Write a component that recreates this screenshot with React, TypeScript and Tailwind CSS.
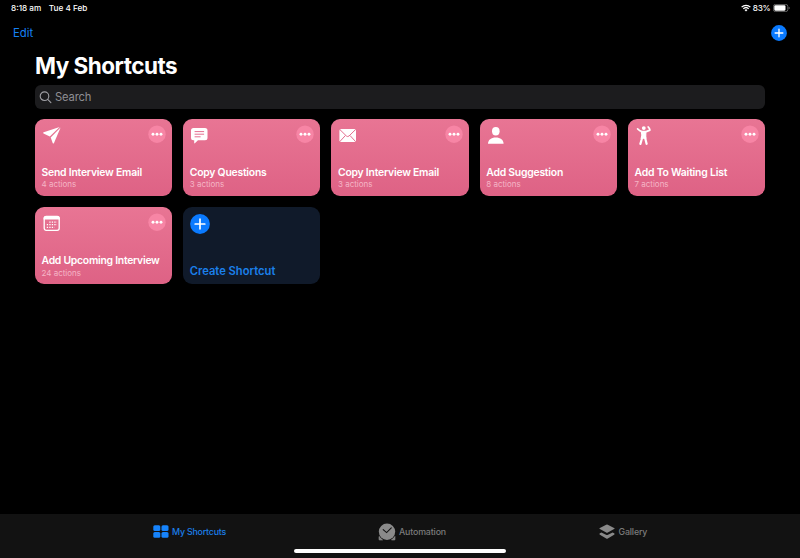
import type { ReactNode } from "react";

type Shortcut = { title: string; actions: number; icon: ReactNode; tracking: string };

const SendIcon = () => (
  <svg width="20" height="20" viewBox="0 0 20 20" fill="#fff">
    <path d="M17.600 1.900 1.700 7.300q-1.200.5-.2 1.200l6.300 3z" />
    <path d="M18.600 2.600 12 17.900q-.7 1.200-1.300 0L8.700 12.400z" />
  </svg>
);

const MessageIcon = () => (
  <svg width="20" height="20" viewBox="0 0 20 20">
    <path
      d="M3.500 3h11.500a2.500 2.500 0 0 1 2.500 2.500v7.300a2.500 2.500 0 0 1-2.500 2.500H8l-3.200 3q-.6.300-.6-.4v-2.600h-.7a2.500 2.500 0 0 1-2.500-2.500V5.500A2.500 2.500 0 0 1 3.500 3z"
      fill="#fff"
    />
    <path d="M4.600 6.600h9.500M4.600 9.200h9.500M4.600 11.800h6" stroke="#e56f90" strokeWidth="1" />
  </svg>
);

const MailIcon = () => (
  <svg width="20" height="20" viewBox="0 0 20 20">
    <rect x="1.400" y="4" width="16.600" height="13" rx="1.800" fill="#fff" />
    <path
      d="M1.900 4.600 8.400 11q1.300 1.100 2.600 0l6.500-6.400M1.900 16.500l5.500-6M17.500 16.500l-5.500-6"
      fill="none"
      stroke="#e56f90"
      strokeWidth="1"
    />
  </svg>
);

const PersonIcon = () => (
  <svg width="20" height="20" viewBox="0 0 20 20" fill="#fff">
    <ellipse cx="9.800" cy="6.300" rx="3.800" ry="4.200" />
    <path d="M2 18.800c0-4 3.200-6.300 7.800-6.300s7.800 2.300 7.800 6.300z" />
  </svg>
);

const DancerIcon = () => (
  <svg width="20" height="20" viewBox="0 0 20 20" fill="none" stroke="#fff" strokeLinecap="round" strokeLinejoin="round">
    <circle cx="9.800" cy="3.100" r="1.900" fill="#fff" stroke="none" />
    <path d="M3.600 3.900 6 5.800l2 .8h4.300l3.600-1.500-.5-1.600-1.200-1.500" strokeWidth="1.700" />
    <path d="M7.400 6.800h4.400l-.1 5.400.2 1H7.300l.6-3z" fill="#fff" strokeWidth="1.200" />
    <path d="m8.200 12.200-.7 2.800-1.100 3.900M11 12.200l.7 3 .9 3.600" strokeWidth="2.200" />
  </svg>
);

const CalendarIcon = () => (
  <svg width="20" height="20" viewBox="0 0 20 20">
    <rect x="2.200" y="3.500" width="15" height="13.800" rx="2" fill="none" stroke="#fff" strokeWidth="1.300" />
    <path d="M1.600 6.500v-1q0-2.500 2.500-2.500h11.200q2.500 0 2.500 2.500v1z" fill="#fff" />
    <path
      d="M7.300 9.100h7.700M4.800 11.700h10.200M4.800 14.300h7.700"
      stroke="#fff"
      strokeWidth="1.300"
      strokeDasharray="1.300 1.200"
    />
  </svg>
);

const shortcuts: Shortcut[] = [
  { title: "Send Interview Email", actions: 4, icon: <SendIcon />, tracking: "tracking-[-0.22px]" },
  { title: "Copy Questions", actions: 3, icon: <MessageIcon />, tracking: "tracking-[-0.23px]" },
  { title: "Copy Interview Email", actions: 3, icon: <MailIcon />, tracking: "tracking-[-0.22px]" },
  { title: "Add Suggestion", actions: 8, icon: <PersonIcon />, tracking: "tracking-[-0.23px]" },
  { title: "Add To Waiting List", actions: 7, icon: <DancerIcon />, tracking: "tracking-[-0.2px]" },
  { title: "Add Upcoming Interview", actions: 24, icon: <CalendarIcon />, tracking: "tracking-[-0.26px]" },
];

const PlusCircle = ({ size }: { size: number }) => (
  <svg width={size} height={size} viewBox="0 0 20 20">
    <circle cx="10" cy="10" r="9.900" fill="#0a7aff" />
    <path d="M10 5.200v9.600M5.200 10h9.600" stroke="#fff" strokeWidth="1.700" strokeLinecap="round" />
  </svg>
);

function ShortcutCard({ title, actions, icon, tracking }: Shortcut) {
  return (
    <div className="flex h-[76.800px] flex-col justify-between rounded-[9px] bg-linear-to-b from-[#e87594] to-[#de6285] pt-[6px] pr-[6px] pb-[5.500px] pl-[6.500px]">
      <div className="flex items-start justify-between">
        {icon}
        <svg width="18" height="18" viewBox="0 0 18 18">
          <circle cx="9" cy="9.200" r="8.700" fill="#f785a5" />
          <g fill="#fff">
            <circle cx="5" cy="9.300" r="1.450" />
            <circle cx="9" cy="9.300" r="1.450" />
            <circle cx="13" cy="9.300" r="1.450" />
          </g>
        </svg>
      </div>
      <div className="whitespace-nowrap">
        <div className={`text-[10.400px] leading-[13.500px] font-semibold text-white ${tracking}`}>{title}</div>
        <div className="text-[8px] leading-[11px] text-[#f5b5c6]">{actions} actions</div>
      </div>
    </div>
  );
}

export default function App() {
  return (
    <div className="flex h-[558px] w-[800px] flex-col overflow-hidden bg-black font-['Inter','Liberation_Sans',sans-serif] text-white">
      <header className="flex h-4 items-center justify-between pr-[10.500px] pl-[11px] text-[8.200px] leading-4 font-medium">
        <div className="flex gap-[7.500px]">
          <span>8:18 am</span>
          <span>Tue 4 Feb</span>
        </div>
        <div className="flex items-center gap-[2px]">
          <svg width="10" height="8" viewBox="0 0 20 15" fill="none" stroke="#fff" strokeWidth="2.600">
            <path d="M1.200 5.700a12.500 12.500 0 0 1 17.600 0M4.600 9a7.800 7.800 0 0 1 10.800 0" />
            <path d="M7 11.500a4.300 4.300 0 0 1 6 0l-3 3z" fill="#fff" stroke="none" />
          </svg>
          <span className="tracking-[-0.2px]">83%</span>
          <svg width="17" height="8" viewBox="0 0 17 8">
            <rect x=".4" y=".4" width="14.400" height="7.200" rx="2" fill="none" stroke="#777" strokeWidth=".8" />
            <rect x="1.300" y="1.300" width="11.200" height="5.400" rx="1.100" fill="#fff" />
            <path d="M15.700 2.700q1 .4 1 1.300t-1 1.300z" fill="#777" />
          </svg>
        </div>
      </header>

      <nav className="flex h-[33px] items-center justify-between pr-[13.500px] pl-[13px]">
        <button className="text-[11.300px] leading-4 text-[#1681f4]">Edit</button>
        <PlusCircle size={16} />
      </nav>

      <main className="flex flex-1 flex-col px-[35px]">
        <h1 className="h-9 text-[22.500px] leading-[34px] font-bold tracking-[-0.5px] whitespace-nowrap">My Shortcuts</h1>
        <div className="flex h-6 items-center gap-[3px] rounded-[6px] bg-[#1c1c1e] pl-[4px] text-[11.200px] text-[#8e8e93]">
          <svg width="13" height="13" viewBox="0 0 13 13" fill="none" stroke="#a0a0a5" strokeWidth="1.100" strokeLinecap="round">
            <circle cx="5.500" cy="5.200" r="4.300" />
            <path d="m8.700 8.400 3.200 3.200" />
          </svg>
          <span className="tracking-[-0.15px]">Search</span>
        </div>
        <div className="mt-[10.200px] grid grid-cols-5 gap-x-[11.200px] gap-y-[11.400px]">
          {shortcuts.map((s) => (
            <ShortcutCard key={s.title} {...s} />
          ))}
          <div className="flex h-[76.800px] flex-col justify-between rounded-[9px] bg-[#101a2a] pt-[6.500px] pb-[5px] pl-[6.500px]">
            <PlusCircle size={20} />
            <div className="text-[11.200px] leading-4 font-semibold text-[#1b80ea]">Create Shortcut</div>
          </div>
        </div>
      </main>

      <footer className="flex h-11 flex-col bg-[#121212] text-[8.800px] leading-3 font-medium text-[#7c7c7c]">
        <div className="flex h-[35px] items-center">
          <div className="flex w-[226px] items-center gap-[3.500px] pl-[152.500px] whitespace-nowrap text-[#1b7fe9]">
            <svg className="shrink-0" width="16" height="13" viewBox="0 0 16 13" fill="#1683fb">
              <rect x=".3" y=".3" width="7" height="5.700" rx="1.500" />
              <rect x="8.500" y=".3" width="7" height="5.700" rx="1.500" />
              <rect x=".3" y="7" width="7" height="5.700" rx="1.500" />
              <rect x="8.500" y="7" width="7" height="5.700" rx="1.500" />
            </svg>
            <span className="tracking-[-0.18px]">My Shortcuts</span>
          </div>
          <div className="flex w-[219px] items-center gap-[3px] pl-[152px]">
            <svg className="shrink-0" width="18" height="18" viewBox="0 0 18 18">
              <path d="M1.200 13.500v3.300h3.300zM16.800 13.500v3.300h-3.300z" fill="#8a8a8a" stroke="#8a8a8a" strokeLinejoin="round" />
              <circle cx="9" cy="8.800" r="8.800" fill="#121212" />
              <circle cx="9" cy="8.800" r="8.200" fill="#8a8a8a" />
              <path d="m5.200 6.600 3.400 3 4.700-4.700" fill="none" stroke="#121212" strokeWidth="1.100" strokeLinecap="round" />
            </svg>
            <span className="tracking-[-0.14px]">Automation</span>
          </div>
          <div className="flex items-center gap-[4px] pl-[153.500px]">
            <svg className="shrink-0" width="16" height="16" viewBox="0 0 16 16" fill="#8a8a8a">
              <path d="M7.200.7q.8-.4 1.600 0l6.300 3.200q1 .6 0 1.200L8.800 8.500q-.8.400-1.600 0L.9 5.100q-1-.6 0-1.200z" />
              <path d="M2.400 8.400 7 10.800q1 .5 2 0l4.600-2.400 1.500.8q1 .8 0 1.500l-6.300 3.900q-.8.500-1.600 0L.9 10.700q-1-.7 0-1.500z" />
            </svg>
            <span className="tracking-[-0.14px]">Gallery</span>
          </div>
        </div>
        <div className="ml-[294px] h-[4px] w-[212px] rounded-full bg-white" />
      </footer>
    </div>
  );
}
